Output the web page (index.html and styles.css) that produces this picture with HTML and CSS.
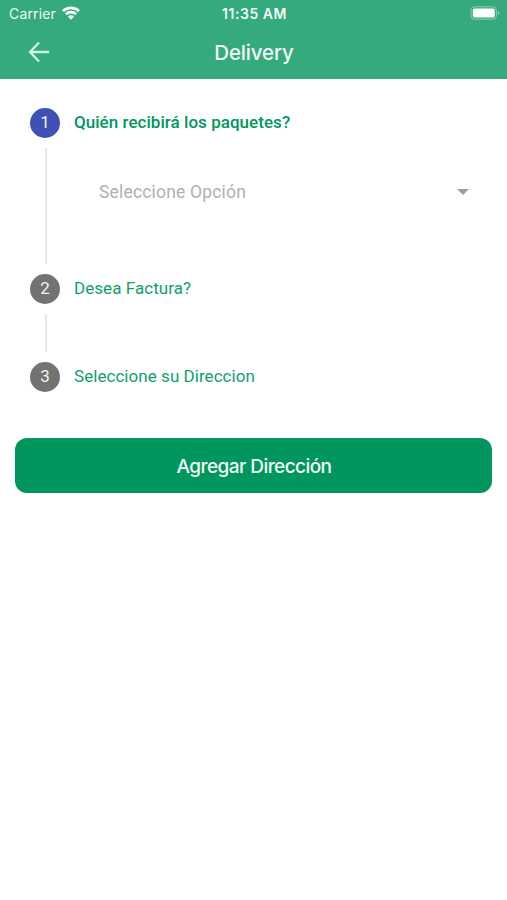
FILE: index.html
```html
<!DOCTYPE html>
<html lang="es">
<head>
<meta charset="utf-8">
<title>Delivery</title>
<link rel="stylesheet" href="styles.css">
</head>
<body>
<header class="header">
  <div class="status">
    <div class="carrier"><span class="carrier-name">Carrier</span>
      <svg class="wifi" viewBox="0 0 18 14"><path d="M9 13.8 5.9 10.6a4.4 4.4 0 0 1 6.2 0zM4.8 9.2 2.9 7.3a8.7 8.7 0 0 1 12.2 0L13.2 9.2a6.1 6.1 0 0 0-8.4 0zM1.9 6.1 0 4.2a12.8 12.8 0 0 1 18 0L16.1 6.1A10.2 10.2 0 0 0 1.9 6.1z"/></svg>
    </div>
    <span class="clock">11:35 AM</span>
    <svg class="battery" viewBox="0 0 30 14"><rect class="shell" x="1" y=".8" width="25.5" height="12.4" rx="3.8"/><rect x="2.8" y="2.5" width="22" height="9" rx="2"/><path class="tip" d="M28 5q2.8 2 0 4z"/></svg>
  </div>
  <div class="nav">
    <svg class="back" viewBox="0 0 22 20"><path d="M20 10H2.2M10.3 1.2 2 10l8.3 8.8"/></svg>
    <h1 class="title">Delivery</h1>
  </div>
</header>
<main>
  <ol class="steps">
    <li class="step active"><span class="badge">1</span><h2 class="label">Quién recibirá los paquetes?</h2>
      <div class="line"></div>
      <div class="select"><span class="placeholder">Seleccione Opción</span><svg class="caret" viewBox="0 0 12 6"><path d="M0 0h12L6 6z"/></svg></div></li>
    <li class="step second"><span class="badge">2</span><h2 class="label">Desea Factura?</h2><div class="line"></div></li>
    <li class="step"><span class="badge">3</span><h2 class="label">Seleccione su Direccion</h2></li>
  </ol>
  <button class="add"><span class="add-text">Agregar Dirección</span></button>
</main>
</body>
</html>
```
FILE: styles.css
```css
* { box-sizing: border-box; }
body { margin: 0; background: #fff; font-family: Roboto, sans-serif; }
.header { height: 79px; background: #34aa7d; color: #f2fbf7; }
.status { height: 27px; display: grid; grid-template-columns: 1fr auto 1fr; align-items: center; padding: 0 7px 0 9px; font: 14px/27px Inter, sans-serif; }
.carrier { display: flex; align-items: center; gap: 6px; }
.carrier-name { letter-spacing: .15px; }
.wifi { width: 18px; height: 14px; margin-top: -1px; fill: #fff; }
.clock { font-weight: 600; font-size: 14px; letter-spacing: .55px; }
.battery { width: 30px; height: 14px; margin-top: -1px; fill: #fff; justify-self: end; }
.battery .shell { fill: none; stroke: #8fd0b6; }
.battery .tip { fill: #8fd0b6; }
.nav { height: 52px; display: grid; grid-template-columns: 68px 1fr 68px; align-items: center; }
.back { width: 22px; height: 20px; margin: -2px 0 0 28px; fill: none; stroke: #d3f3e5; stroke-width: 2.4; stroke-linecap: round; stroke-linejoin: round; }
.title { margin: -1px 0 0 1px; text-align: center; font: 500 20.5px/24px Inter, sans-serif; letter-spacing: -.15px; }
.steps { list-style: none; margin: 0; padding: 28px 30px 0; }
.step { display: grid; grid-template-columns: 30px 1fr; grid-template-rows: 30px; column-gap: 14px; height: 30px; }
.active { height: 167px; grid-template-rows: 30px 137px; }
.second { height: 88px; grid-template-rows: 30px 58px; }
.badge { width: 30px; height: 30px; border-radius: 50%; background: #737373; color: #f2f2f2; font-size: 17px; line-height: 29px; text-align: center; }
.active .badge { background: #3f51b5; margin-top: 1px; line-height: 28px; }
.label { margin: 0; font-size: 17px; line-height: 29px; font-weight: 400; letter-spacing: .05px; color: #109f6b; white-space: nowrap; }
.active .label { font-weight: 500; line-height: 31px; letter-spacing: .04px; color: #00965e; }
.line { width: 2px; margin: 11px 0 10px 14.5px; background: #e9e9e9; }
.second .line { margin-top: 10px; }
.select { height: 30px; margin: 40px 8px 0 25px; display: flex; align-items: center; justify-content: space-between; color: #b0b0b0; font-size: 17.5px; }
.placeholder { letter-spacing: .18px; }
.caret { width: 12px; height: 6px; fill: #a0a0a0; }
.add { display: block; width: 477px; height: 55px; margin: 46px 15px 0; border: 0; border-radius: 12px; background: #00965e; color: #f0fbf6; font: 500 19px/57px Inter, sans-serif; letter-spacing: -.56px; padding: 0 0 0 1px; }
.add-text { display: block; }
```
